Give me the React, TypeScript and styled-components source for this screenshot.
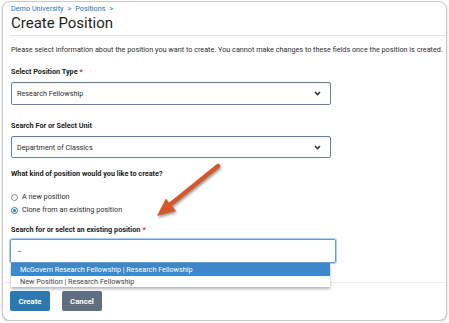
import React from 'react';
import styled, { createGlobalStyle } from 'styled-components';

const GlobalStyle = createGlobalStyle`
	html, body {
		margin: 0;
		padding: 0;
		background: #ffffff;
	}
	body {
		font-family: Roboto, 'Liberation Sans', sans-serif;
		color: #333;
	}
`;

const TEXT = '7.25px';

const Card = styled.div`
	position: relative;
	box-sizing: border-box;
	width: 445px;
	height: 320px;
	margin: 1px 0 0 2px;
	border: 1px solid #c9c9c9;
	border-radius: 8px;
	background: #fff;
	box-shadow: 0 1px 2px rgba(0, 0, 0, 0.25);
	display: flex;
	flex-direction: column;
`;

const Header = styled.div`
	margin-left: 7px;
	padding: 2px 0 3px 1px;
	border-bottom: 1px solid #e4e4e4;
`;

const Breadcrumb = styled.div`
	font-size: ${TEXT};
	line-height: 10px;
	color: #2f6fb8;
	display: flex;
	gap: 4px;
`;

const Title = styled.h1`
	margin: 0;
	font-size: 15px;
	line-height: 18px;
	font-weight: 400;
	color: #1f1f1f;
`;

const Body = styled.div`
	padding: 9px 0 19px 8px;
	display: flex;
	flex-direction: column;
	border-bottom: 1px solid #ececec;
`;

const Intro = styled.p`
	margin: 0;
	font-size: ${TEXT};
	line-height: 10px;
	white-space: nowrap;
	color: #2e2e2e;
`;

const Field = styled.div<{ $top: number }>`
	margin-top: ${(p) => p.$top}px;
	display: flex;
	flex-direction: column;
`;

const Label = styled.div<{ $gap?: number }>`
	font-size: ${TEXT};
	line-height: 10px;
	font-weight: 700;
	color: #222;
	margin-bottom: ${(p) => p.$gap ?? 5}px;
`;

const Required = styled.span`
	color: #c9302c;
	margin-left: 2px;
`;

const SelectBox = styled.div<{ $h: number }>`
	box-sizing: border-box;
	width: 320px;
	height: ${(p) => p.$h}px;
	border: 1px solid #6c8196;
	border-radius: 2px;
	padding: 0 9px 0 5px;
	display: flex;
	align-items: center;
	justify-content: space-between;
	font-size: ${TEXT};
	color: #2e2e2e;
	box-shadow: inset 0 1px 1px rgba(0, 0, 0, 0.06);
`;

const RadioGroup = styled.div`
	margin-top: 13px;
	display: flex;
	flex-direction: column;
	gap: 3px;
`;

const RadioRow = styled.label`
	display: flex;
	align-items: center;
	gap: 4px;
	font-size: ${TEXT};
	line-height: 10px;
	color: #2e2e2e;
`;

const RadioDot = styled.span<{ $checked?: boolean }>`
	box-sizing: border-box;
	width: 7px;
	height: 7px;
	border-radius: 50%;
	border: 1px solid ${(p) => (p.$checked ? '#2b72c2' : '#8a8a8a')};
	display: flex;
	align-items: center;
	justify-content: center;
	&::after {
		content: '';
		width: 3px;
		height: 3px;
		border-radius: 50%;
		background: ${(p) => (p.$checked ? '#2b72c2' : 'transparent')};
	}
`;

const Combo = styled.div`
	position: relative;
	width: 326px;
`;

const SearchInput = styled.div`
	box-sizing: border-box;
	width: 326px;
	height: 24px;
	margin-left: -1px;
	border: 1px solid #5a9ee0;
	border-radius: 2px;
	box-shadow: 0 0 0 1px rgba(110, 170, 230, 0.55);
	padding-left: 6px;
	display: flex;
	align-items: center;
	font-size: ${TEXT};
	color: #444;
`;

const Menu = styled.div`
	position: absolute;
	top: 100%;
	left: 0;
	width: 319px;
	background: #fff;
	box-shadow: 0 2px 3px rgba(0, 0, 0, 0.3);
	z-index: 2;
`;

const Option = styled.div<{ $active?: boolean }>`
	height: ${(p) => (p.$active ? 13 : 11)}px;
	padding-left: 9px;
	display: flex;
	align-items: center;
	font-size: ${TEXT};
	background: ${(p) => (p.$active ? '#3e87c8' : '#fff')};
	color: ${(p) => (p.$active ? '#fff' : '#444')};
`;

const Footer = styled.div`
	padding: 8px 0 0 7px;
	display: flex;
	gap: 12px;
`;

const Button = styled.button<{ $variant: 'primary' | 'secondary' }>`
	width: 40px;
	height: 20px;
	border: none;
	border-radius: 2px;
	padding: 0;
	font-family: inherit;
	font-size: 7.75px;
	font-weight: 700;
	color: #fff;
	background: ${(p) => (p.$variant === 'primary' ? '#2c78b2' : '#5f6f80')};
`;

const Arrow = styled.svg`
	position: absolute;
	left: 147px;
	top: 158px;
	overflow: visible;
	pointer-events: none;
	filter: drop-shadow(1px 2px 1.2px rgba(0, 0, 0, 0.35));
	z-index: 3;
`;

const Chevron = () => (
	<svg width="7" height="5" viewBox="0 0 7 5">
		<path d="M1 1 L3.5 3.5 L6 1" fill="none" stroke="#333" strokeWidth="1.6" />
	</svg>
);

export default function App() {
	return (
		<>
			<GlobalStyle />
			<Card>
				<Header>
					<Breadcrumb>
						<span>Demo University</span>
						<span>&gt;</span>
						<span>Positions</span>
						<span>&gt;</span>
					</Breadcrumb>
					<Title>Create Position</Title>
				</Header>
				<Body>
					<Intro>
						Please select information about the position you want to create. You cannot make
						changes to these fields once the position is created.
					</Intro>
					<Field $top={12}>
						<Label>
							Select Position Type<Required>*</Required>
						</Label>
						<SelectBox $h={23}>
							Research Fellowship
							<Chevron />
						</SelectBox>
					</Field>
					<Field $top={16}>
						<Label>Search For or Select Unit</Label>
						<SelectBox $h={22}>
							Department of Classics
							<Chevron />
						</SelectBox>
					</Field>
					<Field $top={11}>
						<Label $gap={0}>What kind of position would you like to create?</Label>
						<RadioGroup>
							<RadioRow>
								<RadioDot />A new position
							</RadioRow>
							<RadioRow>
								<RadioDot $checked />
								Clone from an existing position
							</RadioRow>
						</RadioGroup>
					</Field>
					<Field $top={10}>
						<Label $gap={4}>
							Search for or select an existing position<Required>*</Required>
						</Label>
						<Combo>
							<SearchInput>–</SearchInput>
							<Menu>
								<Option $active>McGovern Research Fellowship | Research Fellowship</Option>
								<Option>New Position | Research Fellowship</Option>
							</Menu>
						</Combo>
					</Field>
				</Body>
				<Footer>
					<Button $variant="primary">Create</Button>
					<Button $variant="secondary">Cancel</Button>
				</Footer>
				<Arrow width="80" height="65" viewBox="0 0 80 65">
					<line x1="68" y1="6" x2="21" y2="44" stroke="#d4582b" strokeWidth="4.5" strokeLinecap="round" />
					<polygon points="7,56 26,51 15.8,38.4" fill="#d4582b" />
				</Arrow>
			</Card>
		</>
	);
}
